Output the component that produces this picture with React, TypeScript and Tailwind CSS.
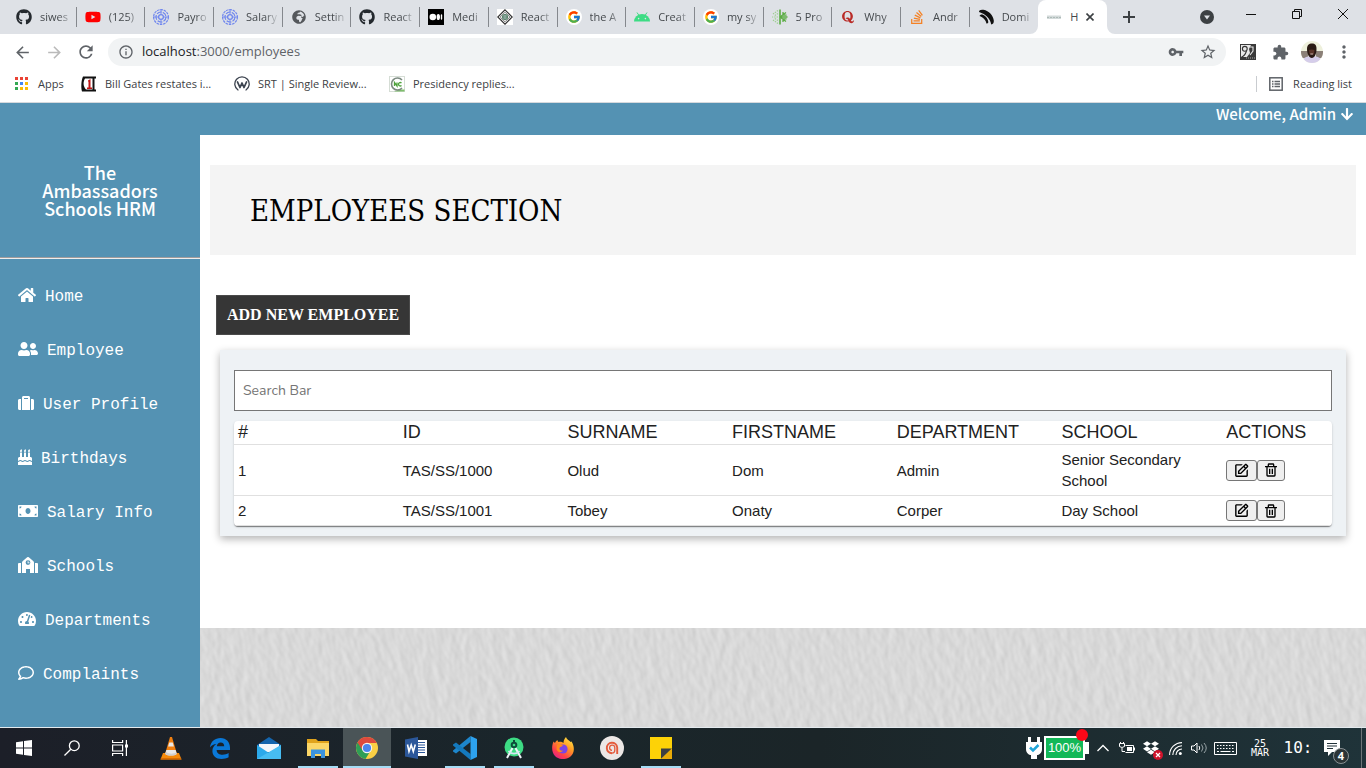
import React from "react";
import {
  FaGithub, FaYoutube, FaGlobeAfrica, FaQuora, FaStackOverflow, FaHome, FaUserFriends, FaSuitcase,
  FaBirthdayCake, FaMoneyBill, FaTachometerAlt, FaRegComment, FaArrowDown, FaDropbox,
} from "react-icons/fa";
import { FcGoogle } from "react-icons/fc";
import { BiEdit, BiTrash } from "react-icons/bi";
import {
  MdArrowBack, MdArrowForward, MdRefresh, MdInfoOutline, MdVpnKey, MdStarBorder, MdExtension, MdMoreVert,
} from "react-icons/md";

/* ---------- favicons ---------- */

const Wheel = () => (
  <svg viewBox="0 0 16 16" className="size-4" fill="none" stroke="#6f86ee">
    <circle cx="8" cy="8" r="7.4" strokeWidth="1.2" strokeDasharray="2.6 0.8" />
    <circle cx="8" cy="8" r="5" strokeWidth="1.2" strokeDasharray="5 1.2" />
    <circle cx="8" cy="8" r="2.4" strokeWidth="1.3" />
    <path d="M8 0v5M8 11v5M0 8h5M11 8h5" strokeWidth="0.9" />
  </svg>
);

const MediumIcon = () => (
  <svg viewBox="0 0 16 16" className="size-4">
    <rect width="16" height="16" fill="#000" />
    <circle cx="4.8" cy="8" r="3.3" fill="#fff" />
    <ellipse cx="10.3" cy="8" rx="1.7" ry="3.1" fill="#fff" />
    <rect x="12.8" y="5.2" width="1.4" height="5.6" rx=".7" fill="#fff" />
  </svg>
);

const Diamond = () => (
  <svg viewBox="0 0 16 16" className="size-4">
    <rect width="16" height="16" fill="#fff" />
    <path d="M8 .8 15.2 8 8 15.2.8 8z" fill="none" stroke="#333" strokeWidth="1.2" />
    <path d="M8 3.2 12.8 8 8 12.8 3.2 8z" fill="none" stroke="#555" strokeWidth=".8" />
    <circle cx="8" cy="8" r="3" fill="#4f7d62" />
    <path d="M6.4 7h3.2M6.4 9h3.2" stroke="#dde" strokeWidth=".8" />
  </svg>
);

const GoogleIcon = () => (
  <span className="flex size-4 items-center justify-center rounded-full bg-white">
    <FcGoogle className="size-3.5" />
  </span>
);

const AndroidIcon = () => (
  <svg viewBox="0 0 16 16" className="size-4">
    <path d="M0 12.5a8 7.6 0 0 1 16 0z" fill="#3ddc84" />
    <path d="m3 3.5 2 3M13 3.5l-2 3" stroke="#3ddc84" strokeWidth="1" />
    <circle cx="4.6" cy="9.6" r=".8" fill="#dee1e6" />
    <circle cx="11.4" cy="9.6" r=".8" fill="#dee1e6" />
  </svg>
);

const Snow = () => (
  <svg viewBox="0 0 16 16" className="size-4" fill="none" stroke="#5cad45">
    <path d="M8 .5v15" strokeWidth="1.6" />
    <path d="M8 8 14 3.5M8 8l6 4.5M8 8h7.5M11 3v3.2h3.6M11 13V9.8h3.6" strokeWidth="1.3" />
    <path d="M6 1.5 1 5M6 14.5 1 11M6 8H0M6 4.5 2 7M6 11.5 2 9" stroke="#9ccf8d" strokeWidth="1.2" strokeDasharray="1.4 1" />
  </svg>
);

const Wave = () => (
  <svg viewBox="0 0 16 16" className="size-4" fill="#111">
    <path d="M1 3C1 1 3 .3 5.500.8 11 2 15 6 15.800 11.500c.2 2-.6 3.700-2.600 4C12.500 10 8 5 1 3z" />
    <path d="M1.500 7c.5-1.500 2-2 3.500-1.300 3 1.300 5 4 5.300 7.300 0 1-.8 1.600-1.900 1.500C8 11 5 8.500 1.500 7z" />
  </svg>
);

const Smudge = () => (
  <svg viewBox="0 0 16 16" className="size-4">
    <rect x="1" y="6.5" width="14" height="3.5" fill="#d3dada" />
    <path d="M1 8.5h14" stroke="#aebbb8" strokeDasharray="2 1" />
  </svg>
);

const tabs: { icon: React.ReactNode; label: string }[] = [
  { icon: <FaGithub className="size-4 text-[#24292e]" />, label: "siwes" },
  { icon: <FaYoutube className="size-4 text-[#ff0000]" />, label: "(125)" },
  { icon: <Wheel />, label: "Payro" },
  { icon: <Wheel />, label: "Salary" },
  { icon: <FaGlobeAfrica className="size-3.5 text-[#54575b]" />, label: "Settin" },
  { icon: <FaGithub className="size-4 text-[#24292e]" />, label: "React" },
  { icon: <MediumIcon />, label: "Medi" },
  { icon: <Diamond />, label: "React" },
  { icon: <GoogleIcon />, label: "the A" },
  { icon: <AndroidIcon />, label: "Creat" },
  { icon: <GoogleIcon />, label: "my sy" },
  { icon: <Snow />, label: "5 Pro" },
  { icon: <FaQuora className="size-3.5 text-[#b92b27]" />, label: "Why" },
  { icon: <FaStackOverflow className="size-4 text-[#f48024]" />, label: "Andr" },
  { icon: <Wave />, label: "Domi" },
];

function TabStrip() {
  return (
    <div className="flex h-[34px] bg-[#dee1e6] pl-2">
      <div className="flex min-w-0 flex-1">
        {tabs.map((t, i) => (
          <div
            key={i}
            className={`flex min-w-0 flex-1 basis-0 items-center ${i === tabs.length - 1 ? "" : "bg-[linear-gradient(#85888d,#85888d)] bg-[length:1px_20px] bg-right bg-no-repeat"}`}
          >
            <a href="#tab" className="flex min-w-0 flex-1 items-center gap-2 pl-2">
              <span className="flex size-4 shrink-0 items-center justify-center">{t.icon}</span>
              <span className="min-w-0 flex-1 whitespace-nowrap text-[11px] text-[#45494d] [mask-image:linear-gradient(to_right,#000_50%,transparent_90%)]">
                {t.label}
              </span>
            </a>
          </div>
        ))}
        <div className="relative flex min-w-0 flex-1 basis-0 rounded-t-lg bg-white">
          <svg viewBox="0 0 8 8" className="absolute bottom-0 -left-2 size-2" fill="#fff"><path d="M8 0v8H0a8 8 0 0 0 8-8z" /></svg>
          <svg viewBox="0 0 8 8" className="absolute -right-2 bottom-0 size-2" fill="#fff"><path d="M0 0v8h8a8 8 0 0 1-8-8z" /></svg>
          <div className="flex min-w-0 flex-1 items-center pl-2">
            <span className="size-4 shrink-0"><Smudge /></span>
            <span className="ml-2 text-[11px] text-[#45494d]">H</span>
            <button aria-label="Close tab" className="ml-1 flex size-4 shrink-0 items-center justify-center">
              <svg viewBox="0 0 8 8" className="size-2" stroke="#3c4043" strokeWidth="1.6"><path d="m.5.5 7 7M7.5.5l-7 7" /></svg>
            </button>
          </div>
        </div>
      </div>
      <div className="flex w-[259px] items-center">
        <button aria-label="New tab" className="ml-2 flex size-7 items-center justify-center">
          <svg viewBox="0 0 12 12" className="size-3" stroke="#3c4043" strokeWidth="2"><path d="M6 0v12M0 6h12" /></svg>
        </button>
        <button aria-label="Search tabs" className="ml-auto mr-3.5 flex size-3.5 items-center justify-center rounded-full bg-[#3c4043]">
          <svg viewBox="0 0 14 14" className="size-3.5" fill="#dee1e6"><path d="M4 5.5h6L7 9.5z" /></svg>
        </button>
        <div className="flex pb-1.5">
          <button aria-label="Minimize" className="flex h-7 w-[46px] items-center justify-center">
            <svg viewBox="0 0 10 10" className="size-2.5" stroke="#111"><path d="M0 5.5h10" /></svg>
          </button>
          <button aria-label="Restore" className="flex h-7 w-[46px] items-center justify-center">
            <svg viewBox="0 0 10 10" className="size-2.5" fill="none" stroke="#111"><path d="M.5 2.5h7v7h-7zM2.5 2.5v-2h7v7h-2" /></svg>
          </button>
          <button aria-label="Close window" className="flex h-7 w-[46px] items-center justify-center">
            <svg viewBox="0 0 10 10" className="size-2.5" stroke="#111"><path d="m0 0 10 10M10 0 0 10" /></svg>
          </button>
        </div>
      </div>
    </div>
  );
}

const barButton = "flex size-8 shrink-0 items-center justify-center text-[#5f6368]";

function Toolbar() {
  return (
    <div className="flex h-9 items-center px-1.5">
      <button aria-label="Back" className={barButton}><MdArrowBack className="size-[19px]" /></button>
      <button aria-label="Forward" className="flex size-8 shrink-0 items-center justify-center text-[#bababa]"><MdArrowForward className="size-[19px]" /></button>
      <button aria-label="Reload" className={barButton}><MdRefresh className="size-5" /></button>
      <div className="mx-1.5 flex h-7 min-w-0 flex-1 items-center rounded-full bg-[#f1f3f4] pl-2.5">
        <MdInfoOutline className="size-4 text-[#5f6368]" />
        <a href="#page" className="ml-2 flex-1 text-[13px] text-[#5f6368]">
          <span className="text-[#202124]">localhost</span>:3000/employees
        </a>
        <button aria-label="Saved passwords" className={barButton}><MdVpnKey className="size-4" /></button>
        <button aria-label="Bookmark" className={barButton}><MdStarBorder className="size-[18px]" /></button>
        <span className="w-0.5" />
      </div>
      <button aria-label="Screenshot extension" className={barButton}>
        <svg viewBox="0 0 16 16" className="size-4">
          <rect width="16" height="16" fill="#3a3a3a" />
          <path d="M1 1h10L9 5l1 4-3 4H1z" fill="#e8e8e8" />
          <circle cx="4.8" cy="4.8" r="2.4" fill="none" stroke="#333" strokeWidth="1.1" />
          <path d="M1.5 13c3-1 4-3 5-6" fill="none" stroke="#333" strokeWidth="1.1" />
          <path d="M10 3h3v4l-3 4" fill="none" stroke="#e8e8e8" strokeWidth="1.1" />
          <path d="M6 14h9" stroke="#aaa" strokeDasharray="1 1" />
        </svg>
      </button>
      <button aria-label="Extensions" className={barButton}><MdExtension className="size-[17px]" /></button>
      <button aria-label="Profile" className={barButton}>
        <svg viewBox="0 0 22 22" className="size-[22px]">
          <clipPath id="face"><circle cx="11" cy="11" r="11" /></clipPath>
          <g clipPath="url(#face)">
            <rect width="22" height="22" fill="#eef0dc" />
            <path d="M0 10h7v7H0zM15 10h7v7h-7z" fill="#8b8078" />
            <path d="M1 22c0-5 4-7 10-7s10 2 10 7z" fill="#d5cdea" />
            <path d="M6 8c0-4 2-5.500 5-5.500S15.500 4 15.500 8c0 5-2 9-4.700 9S6 13 6 8z" fill="#2a1a14" />
            <path d="M8 9c1-.8 4-.8 5.500 0l-.5 4c-1.500 1-3 1-4.500 0z" fill="#593428" />
            <path d="M9.300 13h2.800" stroke="#e2d2cc" strokeWidth=".8" />
          </g>
        </svg>
      </button>
      <button aria-label="Menu" className={barButton}><MdMoreVert className="size-5" /></button>
    </div>
  );
}

function Bookmarks() {
  const dots = ["#ea4335", "#ea4335", "#ea4335", "#34a853", "#4285f4", "#fbbc05", "#34a853", "#fbbc05", "#fbbc05"];
  return (
    <div className="flex h-[33px] items-center border-b border-[#d6d9dd] px-3.5 pb-1 text-[11px] text-[#3c4043]">
      <a href="#apps" className="flex w-[67px] items-center gap-2.5">
        <svg viewBox="0 0 14 14" className="size-3.5">
          {dots.map((c, i) => <rect key={i} x={(i % 3) * 5 + 1} y={Math.floor(i / 3) * 5} width="3" height="3" fill={c} />)}
        </svg>
        Apps
      </a>
      <a href="#gates" className="flex w-[153px] items-center gap-2">
        <svg viewBox="0 0 16 16" className="size-4">
          <path d="M2 .5h13v2H4C2 6 2 10 5 13.500h10v2H1C0 12 0 5 2 .5z" fill="#111" />
          <path d="M11.500 2h2v12.500h-2z" fill="#111" />
          <path d="M7 4.500 9.500 3v8.500H11V13H6v-1.500h1.500V5.500H7z" fill="#c11414" />
        </svg>
        Bill Gates restates i...
      </a>
      <a href="#srt" className="flex w-[155px] items-center gap-2">
        <svg viewBox="0 0 16 16" className="size-4" fill="none" stroke="#3d4450" strokeLinecap="round" strokeLinejoin="round">
          <path d="M4 14A7.200 7.200 0 1 1 12 14" strokeWidth="1.3" />
          <path d="m3.500 6 2.500 5.500L8 7l2 4.500L12.500 6" strokeWidth="1.8" />
        </svg>
        SRT | Single Review...
      </a>
      <a href="#presidency" className="flex items-center gap-2">
        <svg viewBox="0 0 16 16" className="size-4">
          <rect x=".5" y=".5" width="15" height="15" fill="#fff" stroke="#d5ddd5" />
          <path d="M10 13.500h5.500v2H5z" fill="#7fbf6c" />
          <path d="M13 4A6 6 0 1 0 13 12" fill="none" stroke="#7c8a80" strokeWidth="1.6" />
          <path d="M5.500 10V6.500l2.500 3.500V6.500M12.500 7c-1.500-1.200-3 0-3 1.200s1.500 2.500 3 1.300" fill="none" stroke="#4ea23b" strokeWidth="1.3" />
        </svg>
        Presidency replies...
      </a>
      <a href="#reading" className="ml-auto flex h-4 items-center gap-2.5 border-l border-[#c9ccd0] pl-3">
        <svg viewBox="0 0 14 14" className="size-3.5" fill="none" stroke="#5f6368">
          <rect x=".8" y=".8" width="12.4" height="12.4" strokeWidth="1.5" />
          <path d="M3 4.500h1.500M3 7h1.500M3 9.500h1.500M5.500 4.500H11M5.500 7H11M5.500 9.500H11" strokeWidth="1.3" />
        </svg>
        Reading list
      </a>
    </div>
  );
}

/* ---------- application ---------- */

const SchoolIcon = () => (
  <svg viewBox="0 0 20 16" className="h-4 w-5" fill="currentColor">
    <path d="M0 7a1 1 0 0 1 1-1h2v10H0zM20 7a1 1 0 0 0-1-1h-2v10h3z" />
    <path
      fillRule="evenodd"
      d="M4 5.500a2 2 0 0 1 .8-1.500L9.200.3a1.300 1.300 0 0 1 1.600 0L15.200 4a2 2 0 0 1 .8 1.500V16h-4v-4H8v4H4zM10 3.200a2.400 2.400 0 1 0 0 4.800 2.400 2.400 0 0 0 0-4.800z"
    />
    <path d="M9.600 4.200h.9v1.200h1.100v.9h-2z" />
  </svg>
);

const menu: { icon: React.ReactNode; label: string }[] = [
  { icon: <FaHome className="h-4 w-[18px]" />, label: "Home" },
  { icon: <FaUserFriends className="h-4 w-5" />, label: "Employee" },
  { icon: <FaSuitcase className="h-4 w-4" />, label: "User Profile" },
  { icon: <FaBirthdayCake className="h-4 w-3.5" />, label: "Birthdays" },
  { icon: <FaMoneyBill className="h-4 w-5" />, label: "Salary Info" },
  { icon: <SchoolIcon />, label: "Schools" },
  { icon: <FaTachometerAlt className="h-4 w-[18px]" />, label: "Departments" },
  { icon: <FaRegComment className="h-4 w-4" />, label: "Complaints" },
];

function Sidebar() {
  return (
    <aside className="w-[200px] shrink-0 bg-[#5492b3] pb-6 text-white">
      <h2 className="px-8 pt-7 pb-10 text-center font-['Noto_Sans_CJK_SC',sans-serif] text-[18px] leading-[18px] font-medium">
        The Ambassadors Schools HRM
      </h2>
      <hr className="border-t border-b border-t-[#a09c9c] border-b-[#eeeeee]" />
      <nav className="pt-2.5">
        {menu.map((m) => (
          <a key={m.label} href="#menu" className="flex h-[54px] items-center gap-[9px] pl-[18px] font-['Courier_New','Liberation_Mono',monospace] text-[16px] whitespace-nowrap">
            <span className="pb-0.5">{m.icon}</span>
            <span className="pt-0.5">{m.label}</span>
          </a>
        ))}
      </nav>
    </aside>
  );
}

const columns = ["#", "ID", "SURNAME", "FIRSTNAME", "DEPARTMENT", "SCHOOL", "ACTIONS"];
const employees = [
  ["1", "TAS/SS/1000", "Olud", "Dom", "Admin", "Senior Secondary School"],
  ["2", "TAS/SS/1001", "Tobey", "Onaty", "Corper", "Day School"],
];

function EmployeeTable() {
  return (
    <div className="mt-2.5 overflow-hidden rounded bg-white shadow-[0_2px_1px_-1px_rgba(0,0,0,0.3),0_1px_1px_rgba(0,0,0,0.2),0_1px_3px_rgba(0,0,0,0.12)]">
      <table className="w-full table-fixed border-collapse text-left font-['Liberation_Sans',Arial,sans-serif] text-[#212121]">
        <thead>
          <tr className="border-b border-[#e0e0e0]">
            {columns.map((c, i) => (
              <th key={c} scope="col" className={i === 6 ? "w-[10%] pl-1 text-[18px] leading-[23px] font-normal" : "w-[15%] pl-1 text-[18px] leading-[23px] font-normal"}>{c}</th>
            ))}
          </tr>
        </thead>
        <tbody>
          {employees.map((row) => (
            <tr key={row[0]} className="border-b border-[#e0e0e0]">
              {row.map((cell, i) => (
                <td key={i} className="py-1 pl-1 pr-4 text-[15px] leading-[21px]">{cell}</td>
              ))}
              <td className="py-1 pl-1">
                <div className="flex text-black">
                  <button aria-label="Edit" className="flex h-[21px] items-center rounded-[3px] border border-[#767676] bg-[#efefef] px-1.5"><BiEdit className="size-[17px]" /></button>
                  <button aria-label="Delete" className="flex h-[21px] w-7 items-center justify-center rounded-[3px] border border-[#767676] bg-[#efefef]"><BiTrash className="size-4" /></button>
                </div>
              </td>
            </tr>
          ))}
        </tbody>
      </table>
    </div>
  );
}

const Plaster = () => (
  <svg className="absolute inset-0 size-full" aria-hidden="true">
    <filter id="plaster" x="0" y="0" width="100%" height="100%" colorInterpolationFilters="sRGB">
      <feTurbulence type="fractalNoise" baseFrequency="0.12 0.07" numOctaves="2" seed="8" result="n" />
      <feDiffuseLighting in="n" surfaceScale="0.3" diffuseConstant="1" lightingColor="#fafafa">
        <feDistantLight azimuth="200" elevation="60" />
      </feDiffuseLighting>
    </filter>
    <rect width="100%" height="100%" fill="#d9d9d9" />
    <rect x="-200" y="-400" width="3000" height="1600" filter="url(#plaster)" transform="rotate(-15)" />
  </svg>
);

function Application() {
  return (
    <div className="flex flex-1 flex-col">
      <header className="flex h-8 justify-end bg-[#5492b3] pr-3 text-white">
        <button className="flex h-[22px] items-center gap-1 font-['Noto_Sans_CJK_SC',sans-serif] text-[15px] font-medium">
          Welcome, Admin <FaArrowDown className="size-3.5" />
        </button>
      </header>
      <div className="flex flex-1">
        <Sidebar />
        <main className="flex min-w-0 flex-1 flex-col">
          <section className="bg-white px-2.5 pt-[30px] pb-[92px]">
            <div className="flex h-[90px] items-center bg-[#f4f4f4] px-10 pt-1">
              <h1 className="font-['DejaVu_Serif_Condensed','DejaVu_Serif',serif] text-[29px] text-black">EMPLOYEES SECTION</h1>
            </div>
            <button className="mt-10 ml-1.5 h-10 border border-[#4a4a4a] bg-[#363636] px-2.5 font-['Liberation_Serif',serif] text-[16px] font-bold text-white">
              ADD NEW EMPLOYEE
            </button>
            <div className="mx-2.5 mt-[15px] bg-[#eef2f5] px-3.5 pt-5 pb-2.5 shadow-[0_3px_8px_rgba(0,0,0,0.3)]">
              <input
                aria-label="Search Bar"
                placeholder="Search Bar"
                className="block h-[41px] w-full border border-[#767676] bg-white px-2 font-['Nunito','Lato',sans-serif] text-[14px] placeholder:text-[#757575]"
              />
              <EmployeeTable />
            </div>
          </section>
          <div className="relative flex-1 overflow-hidden"><Plaster /></div>
        </main>
      </div>
    </div>
  );
}

/* ---------- taskbar ---------- */

const StartIcon = () => (
  <svg viewBox="0 0 16 16" className="size-4" fill="#fff"><path d="M0 2.300 7 1.300v6.200H0zM8 1.100 16 0v7.500H8zM0 8.500h7v6.200l-7-1zM8 8.500h8V16l-8-1.100z" /></svg>
);
const SearchIcon = () => (
  <svg viewBox="0 0 16 16" className="size-4" fill="none" stroke="#fff" strokeWidth="1.3"><circle cx="10.3" cy="5.7" r="4.9" /><path d="M6.800 9.200.5 15.500" /></svg>
);
const TaskViewIcon = () => (
  <svg viewBox="0 0 16 16" className="size-4" fill="none" stroke="#fff" strokeWidth="1.2"><path d="M.6 0v2.500h10V0M.6 16v-2.500h10V16M.6 5h10v6H.6zM14.400 0v16" /><path d="M13 4.500h3v3h-3z" fill="#fff" stroke="none" /></svg>
);
const Vlc = () => (
  <svg viewBox="0 0 22 24" className="h-6 w-[22px]">
    <path d="M3 17h16l2.500 6.500H.5z" fill="#f58a0b" /><path d="M1 22h20l.5 1.500H.5z" fill="#d96a00" />
    <path d="M10 1h2l5 17c-2 2.500-10 2.500-12 0z" fill="#f07f10" />
    <path d="M9.300 6.500h3.400l1.200 4H8.100zM6.300 14h9.400l1 4c-2 2-9.500 2-11.400 0z" fill="#e9e9e9" />
    <path d="M6 15.500 5.300 18c2 2 9.500 2 11.400 0l-.4-1.500c-2 1.500-8 2-10.300-1z" fill="#cfcfcf" />
  </svg>
);
const Edge = () => (
  <svg viewBox="0 0 20 21" className="h-[21px] w-5" fill="#0a78d7">
    <path d="M0 9.500C.7 3.500 5 0 10.500 0 16.500 0 20 4.300 20 9.800V12H6.600c.2 3.300 3 4.800 6 4.800 2.300 0 4.300-.6 6-1.700v4.200c-2 1.100-4.400 1.700-7 1.700-5.800 0-9.200-3.300-9.200-8 0-3 1.500-5.500 4-7C3.800 6.300 1.500 7.300 0 9.500zm6.800-1.200h7.400c0-2.500-1.200-3.900-3.500-3.900-2.200 0-3.600 1.500-3.900 3.900z" />
  </svg>
);
const Mail = () => (
  <svg viewBox="0 0 24 22" className="h-[22px] w-6">
    <path d="M0 8 12 0l12 8v2H0z" fill="#1465ad" /><path d="M2 7h20v8H2z" fill="#f4f7fa" />
    <path d="M0 8v14h24V8l-12 8z" fill="#2ba9ea" /><path d="M0 22 24 8v14z" fill="#47bdf2" />
  </svg>
);
const Explorer = () => (
  <svg viewBox="0 0 22 19" className="h-[19px] w-[22px]">
    <path d="M0 0h9l2 2h11v15H0z" fill="#e0a31c" /><path d="M0 4h22v13H0z" fill="#fbd667" />
    <path d="M4 10.500h14V19h-4v-4H8v4H4z" fill="#3c93dd" />
  </svg>
);
const Chrome = () => (
  <svg viewBox="0 0 22 22" className="size-[22px]">
    <circle cx="11" cy="11" r="11" fill="#fbcf44" />
    <path d="M11 11 1.500 5.500A11 11 0 0 0 9.500 21.900L15 13z" fill="#2f9e56" />
    <path d="M11 11V6h9.800A11 11 0 0 0 1.500 5.500L6.300 13z" fill="#dd4a3e" />
    <circle cx="11" cy="11" r="5.2" fill="#f5f5f5" /><circle cx="11" cy="11" r="4.1" fill="#4a85ee" />
  </svg>
);
const Word = () => (
  <svg viewBox="0 0 22 22" className="size-[22px]">
    <path d="M11 3h11v16H11z" fill="#fff" /><path d="M12 5.500h8M12 8h8M12 10.500h8M12 13h8M12 15.500h8" stroke="#2b579a" strokeWidth="1" />
    <path d="M0 2.500 13 0v22L0 19.500z" fill="#2b579a" /><path d="m2.500 7.500 1.500 7 2.200-6.500 2.100 6.500 2-7" fill="none" stroke="#fff" strokeWidth="1.6" />
  </svg>
);
const Code = () => (
  <svg viewBox="0 0 24 24" className="size-6">
    <path d="M17.500 0v6L3 17.500 0 15.500v-1z" fill="#1d86cc" /><path d="M0 8.500 3 6.500 17.500 18v6L0 9.500z" fill="#1479bd" />
    <path d="M17.500 0 24 3v18l-6.500 3z" fill="#2da2ee" />
  </svg>
);
const Studio = () => (
  <svg viewBox="0 0 20 22" className="h-[22px] w-5">
    <circle cx="10" cy="10" r="9.5" fill="#3ddc84" /><circle cx="10" cy="8" r="3.3" fill="#0d4c3a" /><circle cx="10" cy="8" r="1.3" fill="#3ddc84" />
    <path d="M9 3h2v3H9z" fill="#0d4c3a" /><path d="m8.500 11-5.500 10M11.500 11 17 21" stroke="#eef4f8" strokeWidth="2" /><path d="M4.500 14c3 3.500 8 3.500 11 0" fill="none" stroke="#d5e6f2" strokeWidth="1.7" />
  </svg>
);
const Firefox = () => (
  <svg viewBox="0 0 22 22" className="size-[22px]">
    <defs><linearGradient id="fx" x1=".9" y1="0" x2=".2" y2="1"><stop offset="0" stopColor="#fff04a" /><stop offset=".4" stopColor="#ff9a24" /><stop offset=".75" stopColor="#ff3f4b" /><stop offset="1" stopColor="#e0218a" /></linearGradient></defs>
    <path d="M14 0c1 3 3 3 4.500 5 .8-.5 1-.5 1-.5C23 10 22.500 16 18.500 19.500 14 23 7 23 3 19 -.5 15.500-.5 9 1.500 4.500L3 6c.5-1.500 1.500-2.500 2.500-3 0 1 .5 1.500 1 2 2-.8 4 0 5 1 0-2.500 1-4.500 2.500-6z" fill="url(#fx)" />
    <circle cx="11" cy="12" r="4.6" fill="#7b45e6" /><path d="M5 8c2-1.500 4-.5 6 .5-1 1.500-3 1-3.500 2.500C7 13 9 14 11 13.500c-2 3-6 1.500-6.500-1.500z" fill="#ff8a1c" />
  </svg>
);
const RoundA = () => (
  <svg viewBox="0 0 24 24" className="size-6">
    <circle cx="12" cy="12" r="12" fill="#ece7e5" />
    <path d="M17.200 18V11.500a5.200 5.200 0 1 0-5.200 5.700" fill="none" stroke="#e45b3c" strokeWidth="1.9" />
    <path d="M12 17.200c2-.2 2.800-1.500 2.800-3v-2.400a2.600 2.600 0 1 0-2.800 2.500" fill="none" stroke="#e45b3c" strokeWidth="1.3" />
  </svg>
);
const Notes = () => (
  <svg viewBox="0 0 22 22" className="size-[22px]"><path d="M0 0h22v22H0z" fill="#fdd207" /><path d="M11 22V11.500h11z" fill="#3c3f42" /><path d="M11 22 22 11.500V22z" fill="#e9ab08" /></svg>
);

const apps: { name: string; icon: React.ReactNode; state?: "open" | "active" }[] = [
  { name: "VLC", icon: <Vlc /> },
  { name: "Edge", icon: <Edge /> },
  { name: "Mail", icon: <Mail /> },
  { name: "File Explorer", icon: <Explorer />, state: "open" },
  { name: "Chrome", icon: <Chrome />, state: "active" },
  { name: "Word", icon: <Word /> },
  { name: "Code", icon: <Code />, state: "open" },
  { name: "Android Studio", icon: <Studio />, state: "open" },
  { name: "Firefox", icon: <Firefox /> },
  { name: "Recorder", icon: <RoundA /> },
  { name: "Sticky Notes", icon: <Notes />, state: "open" },
];

const slot = {
  none: "relative flex h-10 w-12 items-center justify-center",
  open: "relative flex h-10 w-12 items-center justify-center after:absolute after:inset-x-1 after:bottom-0 after:h-0.5 after:bg-[#a5dcf5]",
  active: "relative flex h-10 w-12 items-center justify-center bg-[#4a5457] after:absolute after:inset-x-0 after:bottom-0 after:h-0.5 after:bg-[#a5dcf5]",
};

function Tray() {
  return (
    <div className="ml-auto flex h-10 items-center text-white">
      <span className="flex w-5 justify-center">
        <svg viewBox="0 0 16 24" className="h-6 w-4"><path d="M2 1h3v5h6V1h3v5h2v7c0 4-3 6-5 6v4H5v-4c-2 0-5-2-5-6V6h2z" fill="#fff" /><path d="m4 11.500 3 3L12.500 9" fill="none" stroke="#1fa5d8" strokeWidth="2.5" /></svg>
      </span>
      <span className="relative flex w-[46px] items-center">
        <span className="flex h-6 w-[41px] items-center justify-center border-2 border-white bg-[#12b858] text-[13px] font-['Liberation_Sans',sans-serif]">100%</span>
        <span className="h-3 w-1 bg-white" />
        <span className="absolute -top-[7px] right-0.5 size-3 rounded-full bg-[#fb0718]" />
      </span>
      <button aria-label="Show hidden icons" className="flex w-[25px] justify-center">
        <svg viewBox="0 0 12 8" className="h-2 w-3" fill="none" stroke="#fff" strokeWidth="1.3"><path d="m.5 7 5.500-5.500L11.500 7" /></svg>
      </button>
      <span className="flex w-6 justify-center">
        <svg viewBox="0 0 16 12" className="h-3 w-4" fill="none" stroke="#fff"><path d="M6.500 3.500h8v7h-8M.5 1.500h5v3q-2.500 2-5 0zM1.500 0v1.500M4.500 0v1.500M3 6v3.500h3M15.500 5.500v3" /><path d="M8 5h5v4H8z" fill="#fff" stroke="none" /></svg>
      </span>
      <span className="relative flex w-6 justify-center">
        <FaDropbox className="size-4" />
        <svg viewBox="0 0 10 10" className="absolute right-0 -bottom-1 size-2.5"><circle cx="5" cy="5" r="5" fill="#d0142c" /><path d="m3 3 4 4M7 3 3 7" stroke="#fff" strokeWidth="1.2" /></svg>
      </span>
      <span className="flex w-6 justify-center">
        <svg viewBox="0 0 13 13" className="size-[13px]" fill="none" stroke="#fff" strokeWidth="1.1"><path d="M.6 13A12.400 12.400 0 0 1 13 .6M3.800 13A9.200 9.200 0 0 1 13 3.800M7 13a6 6 0 0 1 6-6" /><circle cx="11.3" cy="11.5" r="1.5" fill="#fff" stroke="none" /></svg>
      </span>
      <span className="flex w-6 justify-center">
        <svg viewBox="0 0 16 12" className="h-3 w-4" fill="none" stroke="#fff"><path d="M.5 4v4h2.500l3 3V1L3 4zM8 4q1.500 2 0 4" /><path d="M10.500 2.500q3 3.500 0 7M13 1q4.500 5 0 10" stroke="#9aa5a8" /></svg>
      </span>
      <span className="flex w-[29px] justify-center">
        <svg viewBox="0 0 23 13" className="h-[13px] w-[23px]" fill="none" stroke="#fff"><path d="M.5.500h22v12H.5z" /><path d="M3 3.500h17M3 6.500h17" strokeDasharray="1.5 1.5" /><path d="M3 9.500h2M6.500 9.500h10M18 9.500h2" /></svg>
      </span>
      <span className="flex w-10 flex-col items-center font-['DejaVu_Sans_Mono',monospace] text-[10px] leading-[9px]">
        <span>25</span>
        <span>MAR</span>
      </span>
      <span className="w-9 text-center font-['DejaVu_Sans_Mono',monospace] text-[16px]">10:</span>
      <button aria-label="Notifications" className="relative flex h-10 w-[46px] items-center justify-start border-r border-[#6c7679] pl-2">
        <svg viewBox="0 0 16 16" className="size-4"><path d="M0 0h16v12H8l-4 4v-4H0z" fill="#fff" /><path d="M3 3.500h10M3 6h10M3 8.500h6" stroke="#22333a" /></svg>
        <span className="absolute right-3 bottom-1 flex size-4 items-center justify-center rounded-full border border-[#8a9295] bg-[#2b3436] text-[11px] font-bold">4</span>
      </button>
      <span className="w-1" />
    </div>
  );
}

function Taskbar() {
  return (
    <footer className="flex h-10 items-center bg-[linear-gradient(to_right,#1c1f28,#1a262b_40%,#1b2528_60%,#1f3339)]">
      <button aria-label="Start" className={slot.none}><StartIcon /></button>
      <button aria-label="Search" className={slot.none}><SearchIcon /></button>
      <button aria-label="Task view" className={slot.none}><TaskViewIcon /></button>
      <div className="ml-[3px] flex gap-px">
        {apps.map((a) => (
          <button key={a.name} aria-label={a.name} className={slot[a.state ?? "none"]}>{a.icon}</button>
        ))}
      </div>
      <Tray />
    </footer>
  );
}

export default function App() {
  return (
    <div className="flex min-h-screen flex-col bg-white font-['Segoe_UI','Open_Sans',sans-serif]">
      <TabStrip />
      <Toolbar />
      <Bookmarks />
      <Application />
      <div className="h-px bg-[#e4eaee]" />
      <Taskbar />
    </div>
  );
}
